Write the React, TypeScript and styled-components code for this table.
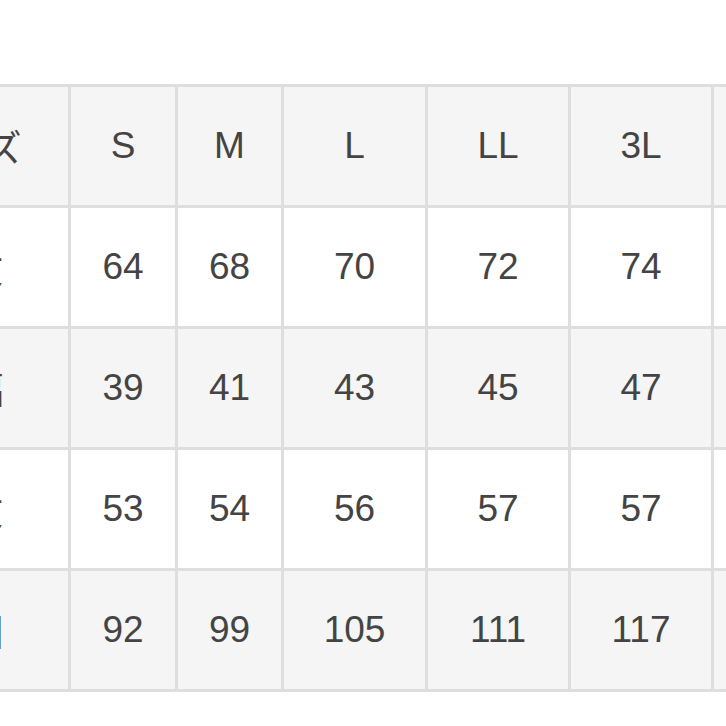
import React from "react";
import styled, { createGlobalStyle } from "styled-components";

const GlobalStyle = createGlobalStyle`
  html, body {
    margin: 0;
    padding: 0;
    background: #ffffff;
    overflow: hidden;
  }
`;

const Page = styled.div`
  width: 726px;
  height: 726px;
  overflow: hidden;
  padding-top: 84px;
  box-sizing: border-box;
`;

const SizeTable = styled.table<{ $width: number }>`
  width: ${({ $width }) => $width}px;
  margin-left: -138px;
  border-collapse: collapse;
  table-layout: fixed;
  font-family: "Liberation Sans", "Noto Sans CJK JP", sans-serif;
  font-size: 37px;
  color: #444444;
`;

const Row = styled.tr<{ $shaded: boolean }>`
  height: 121px;
  background: ${({ $shaded }) => ($shaded ? "#f5f5f5" : "#ffffff")};
`;

const Cell = styled.td`
  border: 3px solid #dedede;
  text-align: center;
  vertical-align: middle;
  padding: 0;
  white-space: nowrap;
`;

const widths = [206, 107, 106, 144, 143, 143, 143];

// last column continues past the right edge of the view
const rows: string[][] = [
  ["サイズ", "S", "M", "L", "LL", "3L", ""],
  ["着丈", "64", "68", "70", "72", "74", ""],
  ["肩幅", "39", "41", "43", "45", "47", ""],
  ["袖丈", "53", "54", "56", "57", "57", ""],
  ["胸囲", "92", "99", "105", "111", "117", ""],
];

export default function App() {
  const total = widths.reduce((a, b) => a + b, 0);
  return (
    <>
      <GlobalStyle />
      <Page>
        <SizeTable $width={total}>
          <colgroup>
            {widths.map((w, i) => (
              <col key={i} style={{ width: w }} />
            ))}
          </colgroup>
          <tbody>
            {rows.map((row, r) => (
              <Row key={r} $shaded={r % 2 === 0}>
                {row.map((value, c) => (
                  <Cell key={c}>{value}</Cell>
                ))}
              </Row>
            ))}
          </tbody>
        </SizeTable>
      </Page>
    </>
  );
}
